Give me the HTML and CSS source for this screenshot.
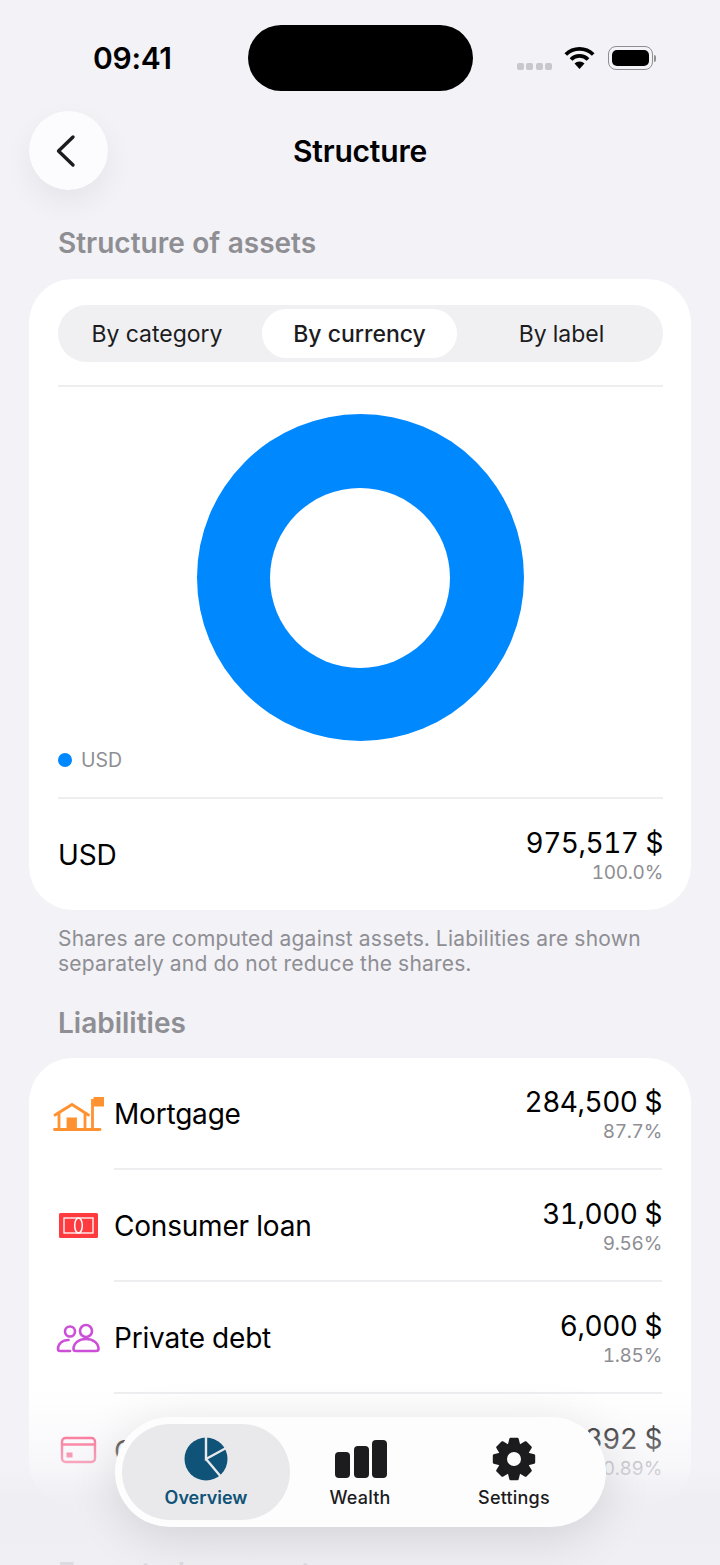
FILE: index.html
```html
<!DOCTYPE html>
<html lang="en">
<head>
    <meta charset="UTF-8">
    <meta name="viewport" content="width=device-width, initial-scale=1.0">
    <title>Structure</title>
    <link rel="stylesheet" href="styles.css">
</head>
<body>
    <div class="screen">
        <!-- Status bar -->
        <div class="status-bar">
            <span class="clock">09:41</span>
            <div class="island"></div>
            <div class="status-icons">
                <div class="signal"><i></i><i></i><i></i><i></i></div>
                <svg class="wifi" width="31" height="23" viewBox="0 0 31 23">
                    <path d="M1.800 8.500a19.600 19.600 0 0 1 27.400 0" fill="none" stroke="#000" stroke-width="3.800"/>
                    <path d="M7 13.500a12 12 0 0 1 17 0" fill="none" stroke="#000" stroke-width="3.800"/>
                    <path d="M10.500 17.500a7 7 0 0 1 10 0L15.500 23z" fill="#000"/>
                </svg>
                <div class="battery"><div class="battery-fill"></div></div>
                <div class="battery-cap"></div>
            </div>
        </div>

        <!-- Header -->
        <header class="top-nav">
            <div class="back-button">
                <svg width="24" height="34" viewBox="0 0 24 34">
                    <path d="M19 3 L4.500 17 L19 31" fill="none" stroke="#1c1c1e" stroke-width="3.400" stroke-linecap="round" stroke-linejoin="round"/>
                </svg>
            </div>
            <h1 class="page-title">Structure</h1>
        </header>

        <main>
            <h2 class="section-title">Structure of assets</h2>
            <section class="card assets-card">
                <div class="segments">
                    <div class="segment">By category</div>
                    <div class="segment selected">By currency</div>
                    <div class="segment">By label</div>
                </div>
                <div class="divider"></div>
                <div class="chart">
                    <div class="donut"><div class="donut-hole"></div></div>
                </div>
                <div class="legend"><span class="legend-dot"></span>USD</div>
                <div class="divider"></div>
                <div class="currency-row">
                    <div class="row-name">USD</div>
                    <div class="row-values">
                        <div class="amount">975,517 $</div>
                        <div class="share">100.0%</div>
                    </div>
                </div>
            </section>
            <p class="note">Shares are computed against assets. Liabilities are shown separately and do not reduce the shares.</p>

            <h2 class="section-title liabilities-title">Liabilities</h2>
            <section class="card liabilities-card">
                <div class="liability">
                    <svg class="row-icon" width="50" height="36" viewBox="0 0 50 36" fill="none" stroke="#ff9230" stroke-width="2.800">
                        <path d="M1.500 33.500H47" stroke-linecap="round"/>
                        <path d="M2 19 L19 8.500 L35.500 19" stroke-linecap="round"/>
                        <path d="M6 17V33M32 17V33M39.500 3V33"/>
                        <path d="M15 33V23H22.500V33" fill="#ff9230"/>
                        <path d="M40.500 1H51V10.500H40.500z" fill="#ff9230" stroke="none"/>
                    </svg>
                    <div class="row-body">
                        <div class="row-name">Mortgage</div>
                        <div class="row-values"><div class="amount">284,500 $</div><div class="share">87.7%</div></div>
                    </div>
                </div>
                <div class="liability">
                    <svg class="row-icon" width="50" height="36" viewBox="0 0 50 36">
                        <rect x="6" y="5" width="39" height="25" rx="1.500" fill="#ff3b3f"/>
                        <rect x="11" y="10" width="29" height="15" fill="none" stroke="#fff" stroke-width="1.300"/>
                        <ellipse cx="25.500" cy="17.500" rx="3.800" ry="7.500" fill="#ff3b3f" stroke="#fff" stroke-width="1.500"/>
                    </svg>
                    <div class="row-body">
                        <div class="row-name">Consumer loan</div>
                        <div class="row-values"><div class="amount">31,000 $</div><div class="share">9.56%</div></div>
                    </div>
                </div>
                <div class="liability">
                    <svg class="row-icon" width="50" height="36" viewBox="0 0 50 36" fill="none" stroke="#cc4fd8" stroke-width="2.600">
                        <circle cx="17" cy="11.500" r="5"/>
                        <circle cx="33" cy="11" r="6"/>
                        <path d="M17 31H7c-1.200 0-2-.8-2-2 0-5 4-9 10.500-9" stroke-linecap="round"/>
                        <path d="M23 31h20c1.500 0 2.500-1 2.500-2 0-6-5.500-10-12.500-10s-12.500 4-12.500 10c0 1 1 2 2.500 2z"/>
                    </svg>
                    <div class="row-body">
                        <div class="row-name">Private debt</div>
                        <div class="row-values"><div class="amount">6,000 $</div><div class="share">1.85%</div></div>
                    </div>
                </div>
                <div class="liability">
                    <svg class="row-icon" width="50" height="36" viewBox="0 0 50 36" fill="none">
                        <rect x="9" y="6" width="33" height="24" rx="3.500" stroke="#ff3b6b" stroke-width="2.400"/>
                        <path d="M9 12.500H42" stroke="#ff3b6b" stroke-width="2.400"/>
                        <rect x="13.500" y="20.500" width="6" height="5" fill="#ff3b6b"/>
                    </svg>
                    <div class="row-body last">
                        <div class="row-name">Credit card</div>
                        <div class="row-values"><div class="amount">2,892 $</div><div class="share">0.89%</div></div>
                    </div>
                </div>
            </section>
            <h2 class="section-title next-title">Expected payments</h2>
        </main>

        <!-- Fade under the tab bar -->
        <div class="bottom-fade"></div>

        <!-- Tab bar -->
        <nav class="tab-bar">
            <div class="tab active">
                <svg width="44" height="44" viewBox="0 0 44 44">
                    <circle cx="22" cy="22" r="21.500" fill="#0f5378"/>
                    <path d="M22 0V22L44 10M22 22L38 41" fill="none" stroke="#e9e9eb" stroke-width="2.400"/>
                </svg>
                <span>Overview</span>
            </div>
            <div class="tab">
                <svg class="bars-icon" width="52" height="44" viewBox="0 0 52 44" fill="#1c1c1e">
                    <rect x="0" y="15" width="15" height="26" rx="4"/>
                    <rect x="19" y="9" width="15" height="32" rx="4"/>
                    <rect x="37" y="3" width="15" height="38" rx="4"/>
                </svg>
                <span>Wealth</span>
            </div>
            <div class="tab">
                <svg width="44" height="44" viewBox="0 0 44 44">
                    <g fill="#1c1c1e" stroke="#1c1c1e" stroke-width="2.400" stroke-linejoin="round">
                        <polygon points="18.500,2 25.500,2 27.500,10 16.500,10"/>
                        <polygon points="18.500,2 25.500,2 27.500,10 16.500,10" transform="rotate(45 22 22)"/>
                        <polygon points="18.500,2 25.500,2 27.500,10 16.500,10" transform="rotate(90 22 22)"/>
                        <polygon points="18.500,2 25.500,2 27.500,10 16.500,10" transform="rotate(135 22 22)"/>
                        <polygon points="18.500,2 25.500,2 27.500,10 16.500,10" transform="rotate(180 22 22)"/>
                        <polygon points="18.500,2 25.500,2 27.500,10 16.500,10" transform="rotate(225 22 22)"/>
                        <polygon points="18.500,2 25.500,2 27.500,10 16.500,10" transform="rotate(270 22 22)"/>
                        <polygon points="18.500,2 25.500,2 27.500,10 16.500,10" transform="rotate(315 22 22)"/>
                    </g>
                    <circle cx="22" cy="22" r="11.500" fill="none" stroke="#1c1c1e" stroke-width="9"/>
                </svg>
                <span>Settings</span>
            </div>
        </nav>
    </div>
</body>
</html>
```

FILE: styles.css
```css
/* Basic Reset */
* {
    margin: 0;
    padding: 0;
    box-sizing: border-box;
}

body {
    font-family: Inter, "Liberation Sans", sans-serif;
    font-variant-numeric: tabular-nums;
    background-color: #f2f2f7;
    color: #000;
    overflow: hidden;
}

.screen {
    position: relative;
    width: 720px;
    height: 1565px;
    overflow: hidden;
}

/* Status bar */
.status-bar {
    display: flex;
    align-items: center;
    height: 111px;
    padding: 5px 64px 0 93px;
}

.clock {
    width: 155px;
    font-size: 30px;
    font-weight: 600;
    font-variant-numeric: normal;
    letter-spacing: -0.3px;
}

.island {
    width: 225px;
    height: 66px;
    background-color: #000;
    border-radius: 33px;
}

.status-icons {
    display: flex;
    align-items: center;
    margin-left: auto;
}

.signal {
    display: flex;
    gap: 2.5px;
    margin: 16px 12px 0 0;
}

.signal i {
    width: 7px;
    height: 7px;
    border-radius: 2px;
    background-color: #c8c8cc;
}

.wifi {
    margin: -1px 13px 0 0;
}

.battery {
    width: 45px;
    height: 24px;
    padding: 3px;
    border: 1.5px solid #8e8e93;
    border-radius: 8px;
}

.battery-fill {
    height: 100%;
    background-color: #000;
    border-radius: 5px;
}

.battery-cap {
    width: 2px;
    height: 7px;
    margin-left: 1px;
    background-color: #8e8e93;
    border-radius: 0 2px 2px 0;
}

/* Header */
.top-nav {
    display: flex;
    align-items: center;
    justify-content: center;
    position: relative;
    height: 79px;
}

.back-button {
    position: absolute;
    left: 29px;
    top: 0;
    display: flex;
    align-items: center;
    justify-content: center;
    width: 79px;
    height: 79px;
    padding-right: 5px;
    background-color: #fcfcfe;
    border-radius: 50%;
    box-shadow: 0 12px 30px rgba(0, 0, 0, 0.06);
}

.page-title {
    font-size: 30px;
    font-weight: 600;
    letter-spacing: -0.2px;
}

/* Main content */
main {
    padding: 0 29px;
}

.section-title {
    height: 36px;
    margin: 35px 0 18px;
    padding-left: 29px;
    color: #8e8e93;
    font-size: 28px;
    font-weight: 600;
    line-height: 36px;
}

.card {
    background-color: #fff;
    border-radius: 44px;
}

.assets-card {
    padding: 26px 28px 0 29px;
    height: 631px;
}

.segments {
    display: flex;
    height: 57px;
    padding: 4px;
    background-color: #f0f0f2;
    border-radius: 29px;
}

.segment {
    display: flex;
    align-items: center;
    justify-content: center;
    width: 200px;
    padding-right: 10px;
    font-size: 23px;
    color: #1c1c1e;
    border-radius: 25px;
}

.segment.selected {
    width: 195px;
    padding-right: 0;
    background-color: #fff;
    font-weight: 500;
}

.segment.selected + .segment {
    width: 202px;
    padding: 0 0 0 7px;
}

.divider {
    height: 2px;
    background-color: #eeeef0;
}

.segments + .divider {
    margin-top: 23px;
}

.chart {
    display: flex;
    justify-content: center;
    padding: 27px 1px 0 0;
}

.donut {
    display: flex;
    align-items: center;
    justify-content: center;
    width: 327px;
    height: 327px;
    background-color: #0088ff;
    border-radius: 50%;
}

.donut-hole {
    width: 180px;
    height: 180px;
    background-color: #fff;
    border-radius: 50%;
}

.legend {
    display: flex;
    align-items: center;
    gap: 9px;
    height: 38px;
    margin-bottom: 18px;
    color: #8e8e93;
    font-size: 19.5px;
}

.legend-dot {
    width: 14px;
    height: 14px;
    background-color: #0088ff;
    border-radius: 50%;
}

.currency-row {
    display: flex;
    align-items: center;
    justify-content: space-between;
    height: 111px;
}

.row-name {
    font-size: 28px;
    letter-spacing: -0.2px;
}

.row-values {
    padding-top: 2px;
    text-align: right;
}

.amount {
    font-size: 28px;
    line-height: 32px;
    letter-spacing: -0.5px;
}

.share {
    margin-top: 2px;
    color: #8e8e93;
    font-size: 19px;
    line-height: 24px;
    letter-spacing: -0.3px;
}

.note {
    margin-top: 16px;
    padding: 0 29px;
    color: #8e8e93;
    font-size: 21px;
    line-height: 25px;
    letter-spacing: 0.22px;
}

.liabilities-title {
    margin: 29px 0 17px;
}

.liabilities-card {
    padding: 0 29px 0 24px;
    height: 448px;
}

.liability {
    display: flex;
    align-items: stretch;
    gap: 11px;
}

.row-icon {
    flex: none;
    align-self: center;
    overflow: visible;
}

.row-body {
    flex: 1;
    display: flex;
    align-items: center;
    justify-content: space-between;
    height: 112px;
    padding-top: 2px;
    border-bottom: 2px solid #eeeef0;
}

.row-body.last {
    border-bottom: none;
}

.next-title {
    margin-top: 49px;
}

/* Fade under the tab bar */
.bottom-fade {
    position: absolute;
    left: 0;
    right: 0;
    bottom: 0;
    height: 175px;
    background: linear-gradient(rgba(242, 242, 247, 0), rgba(242, 242, 247, 0.4) 29%, rgba(242, 242, 247, 0.62) 44%, rgba(238, 238, 243, 0.97) 63%, rgba(238, 238, 243, 0.8));
}

/* Tab bar */
.tab-bar {
    position: absolute;
    left: 115px;
    top: 1417px;
    display: grid;
    grid-template-columns: repeat(3, 1fr);
    width: 491px;
    height: 110px;
    padding: 7px 15px 7px 14px;
    background-color: #fdfdfe;
    border-radius: 55px;
    box-shadow: 0 10px 50px rgba(0, 0, 0, 0.12);
}

.tab {
    display: flex;
    flex-direction: column;
    align-items: center;
    justify-content: flex-end;
    gap: 6px;
    padding-bottom: 12px;
    color: #1c1c1e;
    font-size: 18px;
    font-weight: 500;
    letter-spacing: 0.2px;
    border-radius: 48px;
}

.tab.active {
    margin: 0 -7px;
    background-color: #e9e9eb;
    color: #0f5378;
    font-weight: 600;
    letter-spacing: 0;
}

.bars-icon {
    margin-left: 2px;
}
```
